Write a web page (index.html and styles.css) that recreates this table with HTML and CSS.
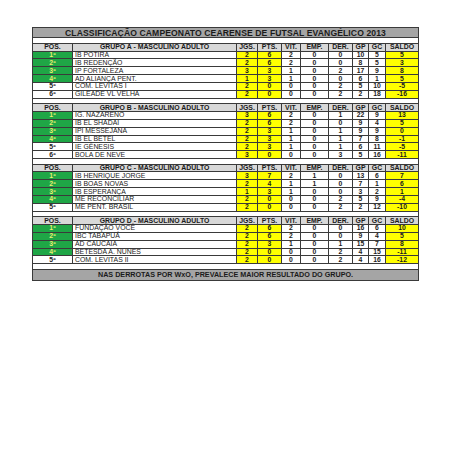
FILE: index.html
```html
<!DOCTYPE html>
<html lang="pt">
<head>
<meta charset="utf-8">
<title>Classificação</title>
<link rel="stylesheet" href="styles.css">
</head>
<body>
<table class="tab">
<colgroup>
<col class="c-pos"><col class="c-name"><col class="c-jgs"><col class="c-pts"><col class="c-vit"><col class="c-emp"><col class="c-der"><col class="c-gp"><col class="c-gc"><col class="c-sal">
</colgroup>
<tr class="title"><td colspan="10">CLASSIFICAÇÃO CAMPEONATO CEARENSE DE FUTSAL EVANGÉLICO 2013</td></tr>
<tr class="blank"><td colspan="10"></td></tr>

<tr class="head"><td>POS.</td><td>GRUPO A - MASCULINO ADULTO</td><td>JGS.</td><td>PTS.</td><td>VIT.</td><td>EMP.</td><td>DER.</td><td>GP</td><td>GC</td><td>SALDO</td></tr>
<tr class="row q"><td class="pos">1º</td><td class="name">IB POTIRA</td><td class="y">2</td><td class="y">6</td><td>2</td><td>0</td><td>0</td><td>10</td><td>5</td><td class="y">5</td></tr>
<tr class="row q"><td class="pos">2º</td><td class="name">IB REDENÇÃO</td><td class="y">2</td><td class="y">6</td><td>2</td><td>0</td><td>0</td><td>8</td><td>5</td><td class="y">3</td></tr>
<tr class="row q"><td class="pos">3º</td><td class="name">IP FORTALEZA</td><td class="y">3</td><td class="y">3</td><td>1</td><td>0</td><td>2</td><td>17</td><td>9</td><td class="y">8</td></tr>
<tr class="row q"><td class="pos">4º</td><td class="name">AD ALIANÇA PENT.</td><td class="y">1</td><td class="y">3</td><td>1</td><td>0</td><td>0</td><td>6</td><td>1</td><td class="y">5</td></tr>
<tr class="row"><td class="pos">5º</td><td class="name">COM. LEVITAS I</td><td class="y">2</td><td class="y">0</td><td>0</td><td>0</td><td>2</td><td>5</td><td>10</td><td class="y">-5</td></tr>
<tr class="row"><td class="pos">6º</td><td class="name">GILEADE VL VELHA</td><td class="y">2</td><td class="y">0</td><td>0</td><td>0</td><td>2</td><td>2</td><td>18</td><td class="y">-16</td></tr>
<tr class="blank"><td colspan="10"></td></tr>

<tr class="head"><td>POS.</td><td>GRUPO B - MASCULINO ADULTO</td><td>JGS.</td><td>PTS.</td><td>VIT.</td><td>EMP.</td><td>DER.</td><td>GP</td><td>GC</td><td>SALDO</td></tr>
<tr class="row q"><td class="pos">1º</td><td class="name">IG. NAZARENO</td><td class="y">3</td><td class="y">6</td><td>2</td><td>0</td><td>1</td><td>22</td><td>9</td><td class="y">13</td></tr>
<tr class="row q"><td class="pos">2º</td><td class="name">IB EL SHADAI</td><td class="y">2</td><td class="y">6</td><td>2</td><td>0</td><td>0</td><td>9</td><td>4</td><td class="y">5</td></tr>
<tr class="row q"><td class="pos">3º</td><td class="name">IPI MESSEJANA</td><td class="y">2</td><td class="y">3</td><td>1</td><td>0</td><td>1</td><td>9</td><td>9</td><td class="y">0</td></tr>
<tr class="row q"><td class="pos">4º</td><td class="name">IB EL BETEL</td><td class="y">2</td><td class="y">3</td><td>1</td><td>0</td><td>1</td><td>7</td><td>8</td><td class="y">-1</td></tr>
<tr class="row"><td class="pos">5º</td><td class="name">IE GÊNESIS</td><td class="y">2</td><td class="y">3</td><td>1</td><td>0</td><td>1</td><td>6</td><td>11</td><td class="y">-5</td></tr>
<tr class="row"><td class="pos">6º</td><td class="name">BOLA DE NEVE</td><td class="y">3</td><td class="y">0</td><td>0</td><td>0</td><td>3</td><td>5</td><td>16</td><td class="y">-11</td></tr>
<tr class="blank"><td colspan="10"></td></tr>

<tr class="head"><td>POS.</td><td>GRUPO C - MASCULINO ADULTO</td><td>JGS.</td><td>PTS.</td><td>VIT.</td><td>EMP.</td><td>DER.</td><td>GP</td><td>GC</td><td>SALDO</td></tr>
<tr class="row q"><td class="pos">1º</td><td class="name">IB HENRIQUE JORGE</td><td class="y">3</td><td class="y">7</td><td>2</td><td>1</td><td>0</td><td>13</td><td>6</td><td class="y">7</td></tr>
<tr class="row q"><td class="pos">2º</td><td class="name">IB BOAS NOVAS</td><td class="y">2</td><td class="y">4</td><td>1</td><td>1</td><td>0</td><td>7</td><td>1</td><td class="y">6</td></tr>
<tr class="row q"><td class="pos">3º</td><td class="name">IB ESPERANÇA</td><td class="y">1</td><td class="y">3</td><td>1</td><td>0</td><td>0</td><td>3</td><td>2</td><td class="y">1</td></tr>
<tr class="row q"><td class="pos">4º</td><td class="name">ME RECONCILIAR</td><td class="y">2</td><td class="y">0</td><td>0</td><td>0</td><td>2</td><td>5</td><td>9</td><td class="y">-4</td></tr>
<tr class="row"><td class="pos">5º</td><td class="name">ME PENT. BRASIL</td><td class="y">2</td><td class="y">0</td><td>0</td><td>0</td><td>2</td><td>2</td><td>12</td><td class="y">-10</td></tr>
<tr class="blank"><td colspan="10"></td></tr>

<tr class="head"><td>POS.</td><td>GRUPO D - MASCULINO ADULTO</td><td>JGS.</td><td>PTS.</td><td>VIT.</td><td>EMP.</td><td>DER.</td><td>GP</td><td>GC</td><td>SALDO</td></tr>
<tr class="row q"><td class="pos">1º</td><td class="name">FUNDAÇÃO VOCÊ</td><td class="y">2</td><td class="y">6</td><td>2</td><td>0</td><td>0</td><td>16</td><td>6</td><td class="y">10</td></tr>
<tr class="row q"><td class="pos">2º</td><td class="name">IBC TABAPUÁ</td><td class="y">2</td><td class="y">6</td><td>2</td><td>0</td><td>0</td><td>9</td><td>4</td><td class="y">5</td></tr>
<tr class="row q"><td class="pos">3º</td><td class="name">AD CAUCAIA</td><td class="y">2</td><td class="y">3</td><td>1</td><td>0</td><td>1</td><td>15</td><td>7</td><td class="y">8</td></tr>
<tr class="row q"><td class="pos">4º</td><td class="name">BETESDA A. NUNES</td><td class="y">2</td><td class="y">0</td><td>0</td><td>0</td><td>2</td><td>4</td><td>15</td><td class="y">-11</td></tr>
<tr class="row"><td class="pos">5º</td><td class="name">COM. LEVITAS II</td><td class="y">2</td><td class="y">0</td><td>0</td><td>0</td><td>2</td><td>4</td><td>16</td><td class="y">-12</td></tr>
<tr class="blank"><td colspan="10"></td></tr>

<tr class="foot"><td colspan="10">NAS DERROTAS POR WxO, PREVALECE MAIOR RESULTADO DO GRUPO.</td></tr>
</table>
</body>
</html>
```
FILE: styles.css
```css
html, body {
  margin: 0;
  padding: 0;
  background: #ffffff;
}
body {
  padding: 27px 0 0 32px;
  font-family: "Liberation Sans", Arial, sans-serif;
  color: #1b1b1b;
}
.tab {
  border-collapse: collapse;
  table-layout: fixed;
  width: 386px;
}
.c-pos { width: 40px; }
.c-name { width: 164px; }
.c-jgs { width: 21px; }
.c-pts { width: 24px; }
.c-vit { width: 19px; }
.c-emp { width: 28px; }
.c-der { width: 24px; }
.c-gp { width: 16px; }
.c-gc { width: 17px; }
.c-sal { width: 33px; }

.tab td {
  padding: 0;
  border: 1px solid #3a3a3a;
  text-align: center;
  vertical-align: middle;
  white-space: nowrap;
  line-height: 6px;
}
.title td {
  height: 9.3px;
  background: #a5a5a5;
  font-weight: bold;
  font-size: 8.6px;
  letter-spacing: 0.1px;
  line-height: 8px;
}
.blank td {
  height: 4.5px;
  background: #ffffff;
  line-height: 1px;
}
.head td {
  height: 6.85px;
  background: #d8d8d8;
  font-weight: bold;
  font-size: 6.9px;
}
.row td {
  height: 6.85px;
  font-weight: bold;
  font-size: 6.8px;
  background: #ffffff;
}
.row td.name {
  text-align: left;
  padding-left: 2px;
  font-weight: normal;
  font-size: 6.9px;
}
.row.q td.pos {
  background: #1fa646;
  color: #e8f070;
}
.row td.y {
  background: #ffff00;
}
.foot td {
  height: 10px;
  background: #a5a5a5;
  font-weight: bold;
  font-size: 7.2px;
  line-height: 7px;
}
```
